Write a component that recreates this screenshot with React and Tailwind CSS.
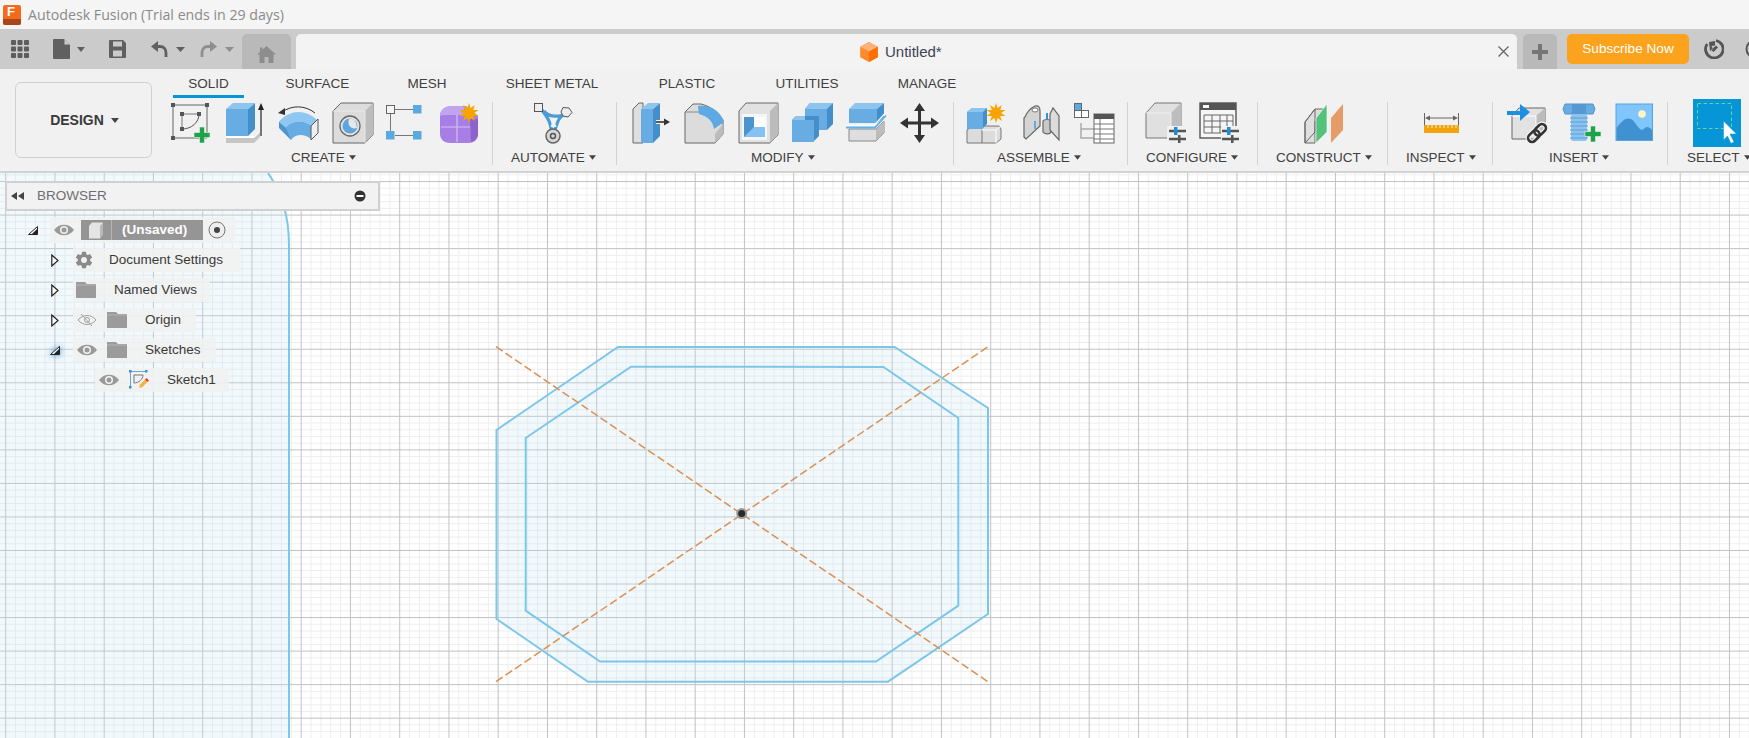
import React from 'react';

const SANS = 'font-["Liberation_Sans",Arial,sans-serif]';

const Box = ({ children, size = 44 }) => (
  <svg width={size} height={44} viewBox={`0 0 ${size} 44`} className="block shrink-0">
    {children}
  </svg>
);

const Plus = ({ x, y }) => (
  <path d={`M${x - 2.5} ${y - 8}h5v5.500h5.500v5h-5.500v5.500h-5v-5.500h-5.500v-5h5.500z`} fill="#1fa34a" stroke="#f1f1f1" strokeWidth="0.6" />
);

const Star = ({ x, y, r = 10 }) => {
  const pts = [];
  for (let i = 0; i < 20; i++) {
    const a = (i * Math.PI) / 10;
    const rr = i % 2 ? r * 0.52 : r;
    pts.push(`${(x + rr * Math.sin(a)).toFixed(1)},${(y - rr * Math.cos(a)).toFixed(1)}`);
  }
  return <polygon points={pts.join(' ')} fill="#f7a400" />;
};

const Sliders = ({ x, y }) => (
  <g>
    <path d={`M${x} ${y}h17M${x} ${y + 8}h17`} stroke="#555" strokeWidth="2.4" />
    <rect x={x + 5} y={y - 4} width="3.500" height="8" fill="#1c8fe0" />
    <rect x={x + 9} y={y + 4} width="2.500" height="8" fill="#555" />
  </g>
);

function SketchIcon() {
  return (
    <Box>
      <path d="M3 3H37V36H3Z" fill="none" stroke="#666" strokeWidth="1" />
      <path d="M12 12H29M12 12V27" stroke="#777" strokeWidth="1" fill="none" />
      <path d="M29 12C29 20 22 27 12 27" stroke="#555" strokeWidth="1" fill="none" />
      {[[3, 3], [37, 3], [3, 36], [12, 12], [29, 12], [12, 27]].map(([x, y]) => (
        <rect key={`${x}-${y}`} x={x - 2} y={y - 2} width="4" height="4" fill="#555" />
      ))}
      <Plus x={32} y={33} />
    </Box>
  );
}

function ExtrudeIcon() {
  return (
    <Box>
      <path d="M2 34V41H30L36 35V28L30 34Z" fill="#c6c6c6" />
      <path d="M2 34H30L36 28V30L30 36H2Z" fill="#fff" />
      <path d="M2 7H24V34H2Z" fill="#67ade3" />
      <path d="M24 7L31 1V27L24 34Z" fill="#448fca" />
      <path d="M2 7L9 1H31L24 7Z" fill="#8dc5ef" />
      <path d="M37 34V5" stroke="#222" strokeWidth="1.200" />
      <path d="M37 1L40 8H34Z" fill="#222" />
    </Box>
  );
}

function RevolveIcon() {
  return (
    <Box>
      <path d="M1 20C11 9 29 9 38 18L38 33C32 27 22 27 13 31L13 38C8 33 4 29 1 26Z" fill="#4d94cd" />
      <path d="M1 20C11 7 28 7 39 18L33 24C24 18 14 19 8 26Z" fill="#8ec7f2" />
      <path d="M8 26C14 19 24 18 33 24V37C26 31 17 32 13 38Z" fill="#67ade3" />
      <path d="M33 24L40 17V31L33 38Z" fill="#eee" stroke="#555" strokeWidth="1" />
      <path d="M4 10C14 3 27 3 37 11" fill="none" stroke="#333" strokeWidth="1" />
      <path d="M0 11L7 6V13Z" fill="#333" />
    </Box>
  );
}

function HoleIcon() {
  return (
    <Box>
      <path d="M1 9L9 1H41V33L33 41H1Z" fill="#dcdcdc" stroke="#666" strokeWidth="1" />
      <path d="M33 9L41 1V33L33 41Z" fill="#bcbcbc" />
      <path d="M33 9H1M33 9V41" stroke="#eee" strokeWidth="0.8" />
      <circle cx="18" cy="24" r="10" fill="#e4e4e4" stroke="#666" strokeWidth="1.300" />
      <circle cx="18" cy="24" r="7.500" fill="#5da5dc" />
      <path d="M17 17C15 23 19 28 25 26C24 17 21 16 17 17Z" fill="#e6e6e6" />
    </Box>
  );
}

function PatternIcon() {
  return (
    <Box>
      <path d="M9 7.500H27M4.500 12V29M9 33.500H27" stroke="#777" strokeWidth="1" />
      <rect x="0.500" y="3.500" width="8" height="8" fill="#f5f5f5" stroke="#666" />
      <rect x="27" y="3" width="8.500" height="8.500" fill="#5aa9e0" />
      <rect x="0" y="29" width="8.500" height="8.500" fill="#5aa9e0" />
      <rect x="27" y="29" width="8.500" height="8.500" fill="#5aa9e0" />
    </Box>
  );
}

function FormIcon() {
  return (
    <Box>
      <path d="M0 14C0 8 5 4 12 4H26L38 14V32C38 37 34 41 29 41H10C4 41 0 37 0 32Z" fill="#a67ee6" />
      <path d="M0 14C0 8 5 4 12 4H24V13H3Z" fill="#c0a4ee" />
      <path d="M30 17H38V32C38 36 35 39 31 40Z" fill="#8c63c9" />
      <path d="M1 25H30M17 13V40" stroke="#d3bff2" strokeWidth="1.200" fill="none" />
      <Star x={29} y={11} r={10} />
    </Box>
  );
}

function AutomateIcon() {
  return (
    <Box>
      <path d="M9 8C13 14 16 17 17 22L19 30M33 11C28 14 25 17 24 22L21 30M11 9C15 15 27 16 33 11" fill="none" stroke="#4d9ad5" strokeWidth="3.200" />
      <path d="M17.500 25L20.500 17L23.500 25Z" fill="#eef5fa" />
      <rect x="1.500" y="1.500" width="8" height="8" fill="#eee" stroke="#555" />
      <path d="M30 5.500L36 6L39 10.500L35 15L30 14L28 10Z" fill="#eee" stroke="#555" />
      <circle cx="20" cy="34" r="7" fill="#d6d6d6" stroke="#666" strokeWidth="1.500" />
      <circle cx="20" cy="34" r="2.500" fill="none" stroke="#555" strokeWidth="1.500" />
    </Box>
  );
}

function PressPullIcon() {
  return (
    <Box>
      <path d="M4 7L10 1H14V41H4Z" fill="#dedede" stroke="#666" strokeWidth="1" />
      <path d="M12 7H24V41H12Z" fill="#67ade3" />
      <path d="M24 7L31 1V34L24 41Z" fill="#448fca" />
      <path d="M12 7L19 1H31L24 7Z" fill="#8dc5ef" />
      <path d="M27 20H37" stroke="#f1f1f1" strokeWidth="4" />
      <path d="M27 20H36" stroke="#333" strokeWidth="1.600" />
      <path d="M41 20L35 16.500V23.500Z" fill="#333" />
    </Box>
  );
}

function FilletIcon() {
  return (
    <Box>
      <path d="M2 10L10 2H18C30 5 36 12 40 18V32L32 41H2Z" fill="#dcdcdc" stroke="#666" strokeWidth="1" />
      <path d="M32 32L40 22V32L32 41Z" fill="#bcbcbc" />
      <path d="M15 4C28 2 38 10 41 20L31 27C30 19 24 14 16 12Z" fill="#5da9e3" />
      <path d="M2 10H16" stroke="#888" strokeWidth="1" />
    </Box>
  );
}

function ShellIcon() {
  return (
    <Box>
      <path d="M2 9L9 1H41V33L33 41H2Z" fill="#e2e2e2" stroke="#666" strokeWidth="1" />
      <path d="M33 9L41 1V33L33 41Z" fill="#bcbcbc" />
      <rect x="5" y="12" width="25" height="26" fill="#f6f6f6" />
      <rect x="7" y="15" width="21" height="20" fill="#fff" />
      <path d="M7 15H17V25H28V35H7Z" fill="#85c2f3" />
      <path d="M7 15H17V25L7 35Z" fill="#4b94cd" />
    </Box>
  );
}

function CombineIcon() {
  return (
    <Box>
      <path d="M14 7L19 1H42V22L36 28H14Z" fill="#448fca" />
      <path d="M14 7L19 1H42L36 7Z" fill="#8dc5ef" />
      <path d="M14 7H36V28H14Z" fill="#67ade3" />
      <path d="M1 18L5 14H28V34L22 40H1Z" fill="#448fca" />
      <path d="M1 18L5 14H14V18Z" fill="#8dc5ef" />
      <path d="M1 18H23V40H1Z" fill="#67ade3" />
      <path d="M14 18H23V28H14Z" fill="#67ade3" />
    </Box>
  );
}

function SplitIcon() {
  return (
    <Box>
      <path d="M4 27H31L39 19V31L31 39H4Z" fill="#dedede" stroke="#888" strokeWidth="1" />
      <path d="M31 27L39 19V31L31 39Z" fill="#bcbcbc" />
      <path d="M4 7L10 1H39L32 7Z" fill="#8dc5ef" />
      <path d="M4 7H32V21H4Z" fill="#67ade3" />
      <path d="M32 7L39 1V15L32 21Z" fill="#448fca" />
      <path d="M1 23.500H29L40 11.500" stroke="#fff" strokeWidth="1.200" fill="none" />
      <path d="M1 25.500H30L41 13.500" stroke="#62b2ea" strokeWidth="1.800" fill="none" />
    </Box>
  );
}

function MoveIcon() {
  return (
    <Box>
      <path d="M20.500 8V36M7 21H36" stroke="#333" strokeWidth="3" />
      <path d="M20.500 1L26 9H15ZM20.500 41L15 33H26ZM1 21L9 15.500V26.500ZM40 21L32 15.500V26.500Z" fill="#333" />
    </Box>
  );
}

function NewComponentIcon() {
  return (
    <Box>
      <path d="M2 28L8 24H34L36 27V37L31 41H2Z" fill="#dcdcdc" stroke="#777" strokeWidth="1" />
      <path d="M17 28V41" stroke="#777" strokeWidth="1" />
      <path d="M17 28H31V41M31 28L36 24" stroke="#fff" strokeWidth="1" fill="none" />
      <path d="M2 10L7 6H22V22L18 26H2Z" fill="#448fca" />
      <path d="M2 10H18V27H2Z" fill="#67ade3" />
      <path d="M2 10L7 6H22L18 10Z" fill="#8dc5ef" />
      <Star x={31} y={11} r={10} />
    </Box>
  );
}

function JointIcon() {
  return (
    <Box>
      <path d="M6 15C8 10 12 6 16 4C20 3 21 6 21 9V24L7 37L5 35V16Z" fill="#d4d4d4" stroke="#666" strokeWidth="1.200" />
      <ellipse cx="16" cy="8" rx="3" ry="2" fill="#fff" stroke="#777" />
      <path d="M16 19V27" stroke="#2d93de" strokeWidth="1.300" />
      <path d="M24 19C25 17 31 17 32 19V30C31 33 25 32 24 30Z" fill="#c8c8c8" stroke="#666" strokeWidth="1.200" />
      <path d="M31 12L34 6L40 14V38L31 28Z" fill="#dcdcdc" stroke="#666" strokeWidth="1.200" />
      <path d="M28 11V18" stroke="#2d93de" strokeWidth="2" />
    </Box>
  );
}

function ComponentTableIcon() {
  return (
    <Box>
      <path d="M8 21V36H21M8 27H21" stroke="#aaa" strokeWidth="1.500" fill="none" />
      <rect x="1.500" y="1.500" width="7" height="7" fill="#5da9e3" stroke="#666" />
      <rect x="1.500" y="8.500" width="7" height="7" fill="#fff" stroke="#666" />
      <rect x="8.500" y="8.500" width="7" height="7" fill="#fff" stroke="#666" />
      <rect x="21" y="12" width="20" height="29" fill="#fff" stroke="#666" />
      <rect x="21" y="12" width="20" height="5" fill="#555" />
      <path d="M21 22H41M21 27H41M21 32H41M21 37H41M27 17V41" stroke="#777" strokeWidth="1" />
    </Box>
  );
}

function ConfigureCubeIcon() {
  return (
    <Box>
      <path d="M3 11L12 1H38V26L29 36H3Z" fill="#e0e0e0" stroke="#777" strokeWidth="1" />
      <path d="M28 11L38 1V26L28 36Z" fill="#bdbdbd" />
      <path d="M3 11H28V36" stroke="#eee" fill="none" />
      <rect x="24" y="24" width="20" height="18" fill="#f1f1f1" />
      <Sliders x={26} y={29} />
    </Box>
  );
}

function ConfigureTableIcon() {
  return (
    <Box>
      <rect x="3" y="1" width="36" height="35" fill="#f6f6f6" stroke="#555" strokeWidth="1.400" />
      <rect x="3" y="1" width="36" height="7" fill="#555" />
      <rect x="6" y="3" width="6" height="3" fill="#f5f5f5" />
      <path d="M7 13H36V31M7 13V31H26M7 19H36M7 25H26M15 13V31M23 13V31M30 13V25" stroke="#666" strokeWidth="1" fill="none" />
      <rect x="24" y="24" width="20" height="18" fill="#f1f1f1" />
      <Sliders x={25} y={29} />
    </Box>
  );
}

function ConstructIcon() {
  return (
    <Box>
      <path d="M3 20L13 7V30L3 41Z M3 20L13 7H22V12L13 20V41H3Z" fill="#dedede" stroke="#666" strokeWidth="1" />
      <path d="M14 16L25 2V30L14 41Z" fill="#55c27c" stroke="#fff" strokeWidth="0.600" />
      <path d="M29 16L41 2V28L29 41Z" fill="#e69c66" />
    </Box>
  );
}

function InspectIcon() {
  return (
    <Box>
      <path d="M5.500 11V23M39.500 11V23" stroke="#666" strokeWidth="1" />
      <path d="M8 16H37" stroke="#666" strokeWidth="1" />
      <path d="M6 16L11 13.500V18.500ZM39 16L34 13.500V18.500Z" fill="#666" />
      <rect x="5" y="23" width="35" height="8" fill="#f5a30a" />
      <path d="M9 23v3M13 23v3M17 23v3M21 23v3M25 23v3M29 23v3M33 23v3M37 23v3" stroke="#fff" strokeWidth="0.800" />
    </Box>
  );
}

function DeriveIcon() {
  return (
    <Box>
      <path d="M7 14L14 6H40V28L32 37H7Z" fill="#e2e2e2" stroke="#666" strokeWidth="1" />
      <path d="M31 14L40 6V28L31 37Z" fill="#bcbcbc" />
      <path d="M31 14H7M31 14V37" stroke="#fff" />
      <path d="M2 9H15V2L25 10L15 19V13H2Z" fill="#1d8fe1" />
      <g transform="rotate(-45 32 31)" fill="none" stroke="#333" strokeWidth="2.600">
        <rect x="21" y="27" width="13" height="8" rx="4" stroke="#f1f1f1" strokeWidth="5" />
        <rect x="30" y="27" width="13" height="8" rx="4" stroke="#f1f1f1" strokeWidth="5" />
        <rect x="21" y="27" width="13" height="8" rx="4" />
        <rect x="30" y="27" width="13" height="8" rx="4" />
      </g>
    </Box>
  );
}

function BoltIcon() {
  return (
    <Box>
      <path d="M6 2H34L36 7L34 12H6L4 7Z" fill="#67ade3" stroke="#4d94cd" strokeWidth="1" />
      <path d="M13 2H27V12H13Z" fill="#5698d2" />
      <rect x="12" y="12" width="16" height="27" rx="2" fill="#8cc4ef" />
      <path d="M11 16H29M11 20H29M11 24H29M11 28H29M11 32H29M11 36H29" stroke="#5a9ed6" strokeWidth="1" />
      <Plus x={34} y={32} />
    </Box>
  );
}

function ImageIcon() {
  return (
    <Box>
      <rect x="3" y="2" width="36.500" height="36.500" fill="#80c5fb" stroke="#56a4dc" strokeWidth="1" />
      <circle cx="29" cy="12" r="3.800" fill="#fff6c4" />
      <path d="M3.500 38V26C9 18 14 15 18 17C22 19 25 27 29 28C32 27 34 22 39 28V38Z" fill="#3f92cf" />
    </Box>
  );
}

function SelectIcon() {
  return (
    <svg width="48" height="48" viewBox="0 0 48 48" className="block shrink-0 -mt-[3px]">
      <rect width="48" height="48" fill="#0696d7" />
      <rect x="4.500" y="4.500" width="34" height="25" fill="none" stroke="#62d69b" strokeWidth="1" strokeDasharray="3.500 2.500" />
      <path d="M30.500 22L43.500 35L37 35L41 43L38 44.500L34.500 37L30.500 41Z" fill="#fff" stroke="#0696d7" strokeWidth="0.500" />
    </svg>
  );
}

const groups = [
  { name: 'CREATE', w: 'w-[327px]', pl: 'pl-[4px]', labelCls: 'pl-[125px]', icons: [SketchIcon, ExtrudeIcon, RevolveIcon, HoleIcon, PatternIcon, FormIcon] },
  { name: 'AUTOMATE', w: 'w-[124px]', pl: 'pl-[40px]', labelCls: 'pl-[18px]', icons: [AutomateIcon] },
  { name: 'MODIFY', w: 'w-[337px]', pl: 'pl-[12px]', labelCls: 'pl-[134px]', icons: [PressPullIcon, FilletIcon, ShellIcon, CombineIcon, SplitIcon, MoveIcon] },
  { name: 'ASSEMBLE', w: 'w-[174px]', pl: 'pl-[11px]', labelCls: 'pl-[43px]', icons: [NewComponentIcon, JointIcon, ComponentTableIcon] },
  { name: 'CONFIGURE', w: 'w-[130px]', pl: 'pl-[15px]', labelCls: 'pl-[18px]', icons: [ConfigureCubeIcon, ConfigureTableIcon] },
  { name: 'CONSTRUCT', w: 'w-[130px]', pl: 'pl-[44px]', labelCls: 'pl-[18px]', icons: [ConstructIcon] },
  { name: 'INSPECT', w: 'w-[105px]', pl: 'pl-[31px]', labelCls: 'pl-[18px]', icons: [InspectIcon] },
  { name: 'INSERT', w: 'w-[175px]', pl: 'pl-[12px]', labelCls: 'pl-[56px]', icons: [DeriveIcon, BoltIcon, ImageIcon] },
  { name: 'SELECT', w: 'w-[82px]', pl: 'pl-[25px]', labelCls: 'pl-[19px]', icons: [SelectIcon], last: true },
];

const tabs = [
  { name: 'SOLID', cls: 'w-[71px] text-[#0696d7] border-[#0696d7]' },
  { name: 'SURFACE', cls: 'w-[147px] border-transparent' },
  { name: 'MESH', cls: 'w-[72px] border-transparent' },
  { name: 'SHEET METAL', cls: 'w-[178px] border-transparent' },
  { name: 'PLASTIC', cls: 'w-[92px] border-transparent' },
  { name: 'UTILITIES', cls: 'w-[148px] border-transparent' },
  { name: 'MANAGE', cls: 'w-[92px] border-transparent' },
];

const Caret = ({ cls = '' }) => (
  <svg width="8" height="5" viewBox="0 0 8 5" className={`inline-block shrink-0 ${cls}`}>
    <path d="M0 0H8L4 5Z" fill="#444" />
  </svg>
);

function QuickBar() {
  return (
    <div className="flex h-[40px] shrink-0 items-center bg-[#cbcbcb]">
      <svg width="18" height="18" viewBox="0 0 18 18" className="ml-[11px] shrink-0" fill="#5d5d5d">
        {[0, 6.500, 13].map((x) =>
          [0, 6.500, 13].map((y) => <rect key={`${x}-${y}`} x={x} y={y} width="5" height="5" rx="1" />)
        )}
      </svg>
      <svg width="17" height="20" viewBox="0 0 17 20" className="ml-[24px] shrink-0">
        <path d="M1 0H11L17 6V19C17 19.500 16.500 20 16 20H1C.5 20 0 19.500 0 19V1C0 .5 .5 0 1 0Z" fill="#606060" />
        <path d="M11.500 0.500V5.500H16.500Z" fill="#cbcbcb" />
      </svg>
      <svg width="8" height="5" viewBox="0 0 8 5" className="ml-[7px] shrink-0"><path d="M0 0H8L4 5Z" fill="#606060" /></svg>
      <svg width="17" height="18" viewBox="0 0 17 18" className="ml-[24px] shrink-0">
        <path d="M1 0H14L17 3V17C17 17.500 16.500 18 16 18H1C.5 18 0 17.500 0 17V1C0 .5 .5 0 1 0Z" fill="#606060" />
        <rect x="4" y="1.500" width="9" height="5" fill="#cbcbcb" />
        <rect x="4" y="10.500" width="9" height="6" fill="#cbcbcb" />
      </svg>
      <svg width="17" height="16" viewBox="0 0 17 16" className="ml-[25px] shrink-0">
        <path d="M5 5.500H9C13 5.500 15 8.500 15 12V16" fill="none" stroke="#606060" strokeWidth="2.800" />
        <path d="M0 5.500L7 0V11Z" fill="#606060" />
      </svg>
      <svg width="9" height="5" viewBox="0 0 9 5" className="ml-[8px] shrink-0"><path d="M0 0H9L4.500 5Z" fill="#606060" /></svg>
      <svg width="17" height="16" viewBox="0 0 17 16" className="ml-[15px] shrink-0">
        <path d="M12 5.500H8C4 5.500 2 8.500 2 12V16" fill="none" stroke="#8e8e8e" strokeWidth="2.800" />
        <path d="M17 5.500L10 0V11Z" fill="#8e8e8e" />
      </svg>
      <svg width="9" height="5" viewBox="0 0 9 5" className="ml-[8px] shrink-0"><path d="M0 0H9L4.500 5Z" fill="#8e8e8e" /></svg>

      <div className="ml-[8px] flex h-[35px] w-[49px] shrink-0 items-center justify-center self-end rounded-t-[5px] bg-[#b9b9b9]">
        <svg width="19" height="17" viewBox="0 0 19 17" className="mt-[6px]">
          <path d="M9.500 0L19 8.500H16.500V17H11.500V11H7.500V17H2.500V8.500H0L3 6V1.500H5.500V3.800Z" fill="#8d8d8d" />
        </svg>
      </div>

      <div className={`relative ml-[5px] flex h-[35px] w-[1221px] shrink-0 items-center self-end rounded-t-[5px] bg-[#f3f3f3] ${SANS}`}>
        <svg width="18" height="20" viewBox="0 0 15 17" className="ml-[564px] shrink-0">
          <path d="M7.500 0L15 4V13L7.500 17L0 13V4Z" fill="#ff8a2b" />
          <path d="M7.500 0L15 4L7.500 8L0 4Z" fill="#ffb27a" />
          <path d="M7.500 8L15 4V13L7.500 17Z" fill="#ff6f00" />
        </svg>
        <span className="ml-[7px] text-[15px] leading-none text-[#3b4552]">Untitled*</span>
        <svg width="11" height="11" viewBox="0 0 11 11" className="absolute left-[1202px] top-[12px]">
          <path d="M0.500 0.500L10.500 10.500M10.500 0.500L0.500 10.500" stroke="#666" strokeWidth="1.300" />
        </svg>
      </div>

      <div className="ml-[6px] flex h-[35px] w-[34px] shrink-0 items-center justify-center self-end rounded-t-[5px] bg-[#b9b9b9]">
        <svg width="16" height="16" viewBox="0 0 16 16"><path d="M6 0H10V6H16V10H10V16H6V10H0V6H6Z" fill="#757575" /></svg>
      </div>

      <div className={`ml-[10px] mt-[5px] flex h-[30px] w-[122px] shrink-0 items-center justify-center self-start rounded-[5px] bg-[#fca31d] text-[13.6px] text-white ${SANS}`}>
        Subscribe Now
      </div>

      <svg width="20" height="20" viewBox="0 0 20 20" className="ml-[15px] shrink-0">
        <path d="M12 1.500A8.800 8.800 0 1 1 3.200 5" fill="none" stroke="#555" strokeWidth="2.800" />
        <path d="M12 6.500L7 11L9.500 13L14 8.500ZM5 3L11 2V6.500L7.500 7L9 10L6 12Z" fill="#555" />
      </svg>
      <svg width="20" height="20" viewBox="0 0 20 20" className="ml-[21px] shrink-0">
        <circle cx="10" cy="10" r="8.500" fill="none" stroke="#555" strokeWidth="2" />
        <circle cx="10" cy="10" r="4.500" fill="none" stroke="#555" strokeWidth="1.500" />
      </svg>
    </div>
  );
}

function Ribbon() {
  return (
    <div className={`flex h-[104px] shrink-0 border-b-2 border-[#d2d2d2] bg-[#f1f1f1] ${SANS}`}>
      <div className="w-[166px] shrink-0 pl-[15px] pt-[13px]">
        <div className="flex h-[76px] w-[137px] items-center justify-center gap-[7px] rounded-[6px] border border-[#cfcfcf] pl-[2px] text-[14px] font-bold text-[#3a3a3a]">
          DESIGN
          <Caret cls="mt-[1px]" />
        </div>
      </div>
      <div className="min-w-0 flex-1">
        <div className="flex h-[29px] pl-[7px]">
          {tabs.map((t) => (
            <div key={t.name} className={`flex h-[29px] items-center justify-center border-b-[3px] pt-[3px] text-[13.5px] leading-none text-[#404040] ${t.cls}`}>
              {t.name}
            </div>
          ))}
        </div>
        <div className="mt-[4px] flex">
          {groups.map((g) => (
            <div key={g.name} className={`h-[63px] shrink-0 ${g.last ? '' : 'border-r border-[#d2d2d2]'} ${g.w}`}>
              <div className={`flex h-[44px] gap-[10px] ${g.pl}`}>
                {g.icons.map((Icon, i) => <Icon key={i} />)}
              </div>
              <div className={`mt-[5px] flex items-center gap-[4px] whitespace-nowrap text-[13.5px] leading-[14px] text-[#404040] ${g.labelCls}`}>
                {g.name}
                <Caret cls="mb-[1px] w-[7px]" />
              </div>
            </div>
          ))}
        </div>
      </div>
    </div>
  );
}

const Eye = ({ off }) => (
  <svg width="20" height="12" viewBox="0 0 20 12" className="shrink-0">
    {off ? (
      <>
        <path d="M1 6C6 0 14 0 19 6C14 12 6 12 1 6Z" fill="none" stroke="#a0a0a0" strokeWidth="1" />
        <circle cx="10" cy="6" r="2.500" fill="none" stroke="#a0a0a0" />
        <path d="M4 0L15 12" stroke="#a0a0a0" strokeWidth="1" />
      </>
    ) : (
      <>
        <path d="M0 6C5 -1 15 -1 20 6C15 13 5 13 0 6Z" fill="#999" />
        <circle cx="10" cy="6" r="4" fill="#f3f3f3" />
        <circle cx="10" cy="6" r="2.500" fill="#999" />
      </>
    )}
  </svg>
);

const Folder = () => (
  <svg width="20" height="16" viewBox="0 0 20 16" className="shrink-0">
    <path d="M0 0H9L11 2H20V16H0Z" fill="#9b9b9b" />
    <path d="M0 3H20" stroke="#c9c9c9" strokeWidth="0.600" />
  </svg>
);

const Closed = () => (
  <svg width="8" height="13" viewBox="0 0 8 13" className="shrink-0">
    <path d="M0.800 1L7 6.500L0.800 12Z" fill="#fff" stroke="#222" strokeWidth="1.200" />
  </svg>
);

const Open = ({ cls = '' }) => (
  <svg width="10" height="9" viewBox="0 0 10 9" className={`shrink-0 ${cls}`}>
    <path d="M0.500 8.500H9.500V0.500Z" fill="#fff" stroke="#222" strokeWidth="1" />
    <path d="M4 8L9 8V3Z" fill="#222" />
  </svg>
);

function Browser() {
  return (
    <div className={`absolute left-[5px] top-[8px] w-[375px] text-[13.5px] text-[#3a3a3a] ${SANS}`}>
      <div className="flex h-[30px] items-center border-2 border-[#d0d0d0] bg-[#f2f2f2]">
        <svg width="13" height="8" viewBox="0 0 13 8" className="ml-[4px] shrink-0">
          <path d="M6 0V8L0 4ZM13 0V8L7 4Z" fill="#444" />
        </svg>
        <span className="ml-[13px] text-[#6f6f6f]">BROWSER</span>
        <svg width="12" height="12" viewBox="0 0 12 12" className="ml-auto mr-[12px]">
          <circle cx="6" cy="6" r="5.500" fill="#333" />
          <rect x="2.500" y="5" width="7" height="2" fill="#fff" />
        </svg>
      </div>
      <div className="mt-[6px] flex h-[26px] items-center">
        <Open cls="ml-[23px]" />
        <div className="ml-[12px] flex h-[26px] w-[185px] items-center bg-[#f1f1f1]/90 pl-[4px]">
          <Eye />
          <div className="ml-[7px] flex h-[20px] w-[122px] items-center bg-[#959595] font-bold text-white">
            <div className="flex h-[20px] w-[31px] items-center justify-center border-r border-[#b5b5b5]">
              <svg width="16" height="17" viewBox="0 0 16 17">
                <path d="M1 4L4 0.500H15V12L12 16.500H1Z" fill="#e4e4e4" />
                <path d="M12 4L15 0.500V12L12 16.500Z" fill="#b8b8b8" />
              </svg>
            </div>
            <span className="pl-[10px]">(Unsaved)</span>
          </div>
          <svg width="18" height="18" viewBox="0 0 18 18" className="ml-[5px]">
            <circle cx="9" cy="9" r="8" fill="#eee" stroke="#777" />
            <circle cx="9" cy="9" r="3" fill="#444" />
          </svg>
        </div>
      </div>
      <div className="mt-[4px] flex h-[26px] items-center pl-[46px]">
        <Closed />
        <div className="ml-[14px] flex h-[24px] w-[167px] items-center bg-[#f1f1f1]/90 pl-[1px]">
          <svg width="20" height="20" viewBox="0 0 24 24" className="shrink-0">
            <path fill="#8a8a8a" d="M12 15.500A3.500 3.500 0 1 1 12 8.500A3.500 3.500 0 0 1 12 15.500M19.400 13C19.500 12.300 19.500 11.700 19.400 11L21.500 9.400C21.700 9.200 21.800 9 21.600 8.700L19.600 5.300C19.500 5 19.200 4.900 18.900 5L16.500 6C16 5.600 15.400 5.300 14.800 5L14.400 2.400C14.400 2.200 14.200 2 13.900 2H10.100C9.800 2 9.600 2.200 9.600 2.400L9.200 5C8.600 5.300 8 5.600 7.500 6L5.100 5C4.800 4.900 4.500 5 4.400 5.300L2.400 8.700C2.200 9 2.300 9.200 2.500 9.400L4.600 11C4.500 11.700 4.500 12.300 4.600 13L2.500 14.600C2.300 14.800 2.200 15 2.400 15.300L4.400 18.700C4.500 19 4.800 19.100 5.100 19L7.500 18C8 18.400 8.600 18.700 9.200 19L9.600 21.600C9.600 21.800 9.800 22 10.100 22H13.900C14.200 22 14.400 21.800 14.400 21.600L14.800 19C15.400 18.700 16 18.400 16.500 18L18.900 19C19.200 19.100 19.500 19 19.600 18.700L21.600 15.300C21.800 15 21.700 14.800 21.500 14.600Z" />
          </svg>
          <span className="ml-[15px]">Document Settings</span>
        </div>
      </div>
      <div className="mt-[4px] flex h-[26px] items-center pl-[46px]">
        <Closed />
        <div className="ml-[14px] flex h-[24px] w-[137px] items-center bg-[#f1f1f1]/90 pl-[3px]">
          <Folder />
          <span className="ml-[18px]">Named Views</span>
        </div>
      </div>
      <div className="mt-[4px] flex h-[26px] items-center pl-[46px]">
        <Closed />
        <div className="ml-[14px] flex h-[24px] w-[123px] items-center bg-[#f1f1f1]/90 pl-[4px]">
          <Eye off />
          <div className="ml-[10px]"><Folder /></div>
          <span className="ml-[18px]">Origin</span>
        </div>
      </div>
      <div className="mt-[4px] flex h-[26px] items-center pl-[45px]">
        <Open cls="drop-shadow-[0_0_3px_#2f7fc0]" />
        <div className="ml-[13px] flex h-[24px] w-[143px] items-center bg-[#f1f1f1]/90 pl-[4px]">
          <Eye />
          <div className="ml-[10px]"><Folder /></div>
          <span className="ml-[18px]">Sketches</span>
        </div>
      </div>
      <div className="mt-[4px] flex h-[26px] items-center pl-[90px]">
        <div className="flex h-[24px] w-[134px] items-center bg-[#f1f1f1]/90 pl-[4px]">
          <Eye />
          <svg width="20" height="20" viewBox="0 0 20 20" className="ml-[10px] shrink-0">
            <path d="M1.500 1.500H17M1.500 1.500V17" stroke="#6aa6d8" strokeWidth="1" fill="none" />
            <path d="M5 5H14M5 5V13M14 5C14 9 10 13 5 13" stroke="#777" strokeWidth="1" fill="none" />
            <rect x="0" y="0" width="2.500" height="2.500" fill="#3a8fd0" />
            <rect x="16" y="0" width="2.500" height="2.500" fill="#3a8fd0" />
            <rect x="0" y="16" width="2.500" height="2.500" fill="#3a8fd0" />
            <path d="M10 18L11 14.500L16 9.500L18.500 12L13.500 17Z" fill="#f0b34a" />
            <path d="M16 9.500L17.500 8L20 10.500L18.500 12Z" fill="#e43d30" />
          </svg>
          <span className="ml-[18px]">Sketch1</span>
        </div>
      </div>
    </div>
  );
}

// fusion viewport: grid, profile on the left and the sketch rectangle
function Viewport() {
  const minorX = [];
  const majorX = [];
  for (let i = 0; i < 36; i++) {
    const x = 5.7 + i * 49.25;
    majorX.push(x);
    for (let j = 1; j < 5; j++) minorX.push(x + (j * 49.25) / 5);
  }
  const minorY = [];
  const majorY = [];
  for (let i = 0; i < 18; i++) {
    const y = 148 + i * 33.54;
    majorY.push(y);
    for (let j = 1; j < 5; j++) minorY.push(y + (j * 33.54) / 5);
  }
  return (
    <svg width="1749" height="565" viewBox="0 173 1749 565" className="block">
      <rect x="0" y="173" width="1749" height="565" fill="#fff" />
      <g stroke="#eeeeee" strokeWidth="1">
        {minorX.map((x) => <line key={x} x1={x} x2={x} y1="173" y2="738" />)}
        {minorY.map((y) => <line key={y} y1={y} y2={y} x1="0" x2="1749" />)}
      </g>
      <g stroke="#c2c2c2" strokeWidth="1">
        {majorX.map((x) => <line key={x} x1={x} x2={x} y1="173" y2="738" />)}
        {majorY.map((y) => <line key={y} y1={y} y2={y} x1="0" x2="1749" />)}
      </g>
      <path d="M0 173H268C280 190 289 215 289 245V738H0Z" fill="#bfe3f5" fillOpacity="0.22" />
      <path d="M268 173C280 190 289 215 289 245V738" fill="none" stroke="#7cc6ea" strokeWidth="2" />
      <polygon points="496.500,430 618,347 894.600,347 988,408 988,614 888,681.700 588,681.700 496.500,619" fill="#bfe3f5" fillOpacity="0.22" stroke="#7cc6ea" strokeWidth="2" />
      <polygon points="525.700,438 631,366.700 883.400,367 958.300,418 958.300,605.700 876,661.500 600,661.500 525.700,610.700" fill="none" stroke="#7cc6ea" strokeWidth="2" />
      <g stroke="#dc8f52" strokeWidth="1.500" strokeDasharray="8 3.500">
        <line x1="496" y1="346.700" x2="988" y2="681.700" />
        <line x1="496" y1="681.700" x2="988" y2="346.700" />
      </g>
      <circle cx="741.700" cy="513.500" r="5.500" fill="#9a9a9a" />
      <circle cx="741.700" cy="513.500" r="3.500" fill="#2a2a2a" />
    </svg>
  );
}

export default function App() {
  return (
    <div className="flex h-[738px] w-[1749px] flex-col overflow-hidden bg-white">
      <div className="flex h-[29px] shrink-0 items-center bg-[#f5f5f5] pl-[3px]">
        <div className="relative h-[20px] w-[18px] shrink-0 overflow-hidden rounded-[2px] bg-[#f26b1d]">
          <span className='absolute left-[4px] top-[0px] font-["Liberation_Sans",sans-serif] text-[13px] font-bold leading-[14px] text-white'>F</span>
          <div className="absolute bottom-0 h-[6px] w-full bg-[#a8481a]" />
        </div>
        <span className='ml-[7px] font-["Open_Sans",sans-serif] text-[14.2px] text-[#8a8a8a]'>Autodesk Fusion (Trial ends in 29 days)</span>
      </div>
      <QuickBar />
      <Ribbon />
      <div className="relative min-h-0 flex-1 overflow-hidden">
        <Viewport />
        <Browser />
      </div>
    </div>
  );
}
